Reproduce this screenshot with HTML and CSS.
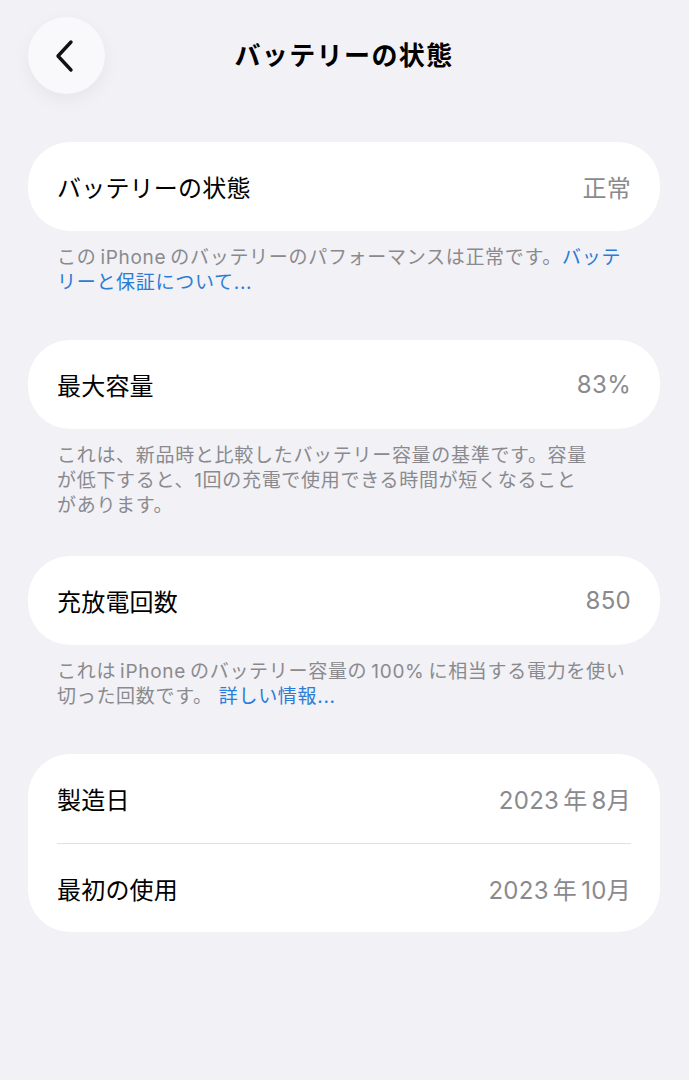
FILE: index.html
```html
<!DOCTYPE html>
<html lang="ja">
<head>
<meta charset="UTF-8">
<meta name="viewport" content="width=device-width, initial-scale=1.0">
<title>バッテリーの状態</title>
<link rel="stylesheet" href="styles.css">
</head>
<body>
  <div class="page">
    <div class="nav-bar">
      <button class="back-button" aria-label="戻る">
        <svg width="24" height="34" viewBox="0 0 24 34">
          <path d="M18 3 L5 17 L18 31" fill="none" stroke="#111" stroke-width="3.4" stroke-linecap="round" stroke-linejoin="round"/>
        </svg>
      </button>
      <h1 class="nav-title">バッテリーの状態</h1>
    </div>

    <div class="section">
      <div class="card">
        <div class="row">
          <span class="label">バッテリーの状態</span>
          <span class="value">正常</span>
        </div>
      </div>
      <p class="footnote">この<span class="latin">iPhone</span>のバッテリーのパフォーマンスは正常です。<a href="#">バッテ<br>リーと保証について...</a></p>
    </div>

    <div class="section">
      <div class="card">
        <div class="row">
          <span class="label">最大容量</span>
          <span class="value">83%</span>
        </div>
      </div>
      <p class="footnote">これは、新品時と比較したバッテリー容量の基準です。容量<br>が低下すると、1回の充電で使用できる時間が短くなること<br>があります。</p>
    </div>

    <div class="section section-tight">
      <div class="card">
        <div class="row">
          <span class="label">充放電回数</span>
          <span class="value">850</span>
        </div>
      </div>
      <p class="footnote">これは<span class="latin">iPhone</span>のバッテリー容量の<span class="latin">100%</span>に相当する電力を使い<br>切った回数です。 <a href="#">詳しい情報...</a></p>
    </div>

    <div class="section">
      <div class="card">
        <div class="row">
          <span class="label">製造日</span>
          <span class="value"><span class="num">2023</span>年<span class="num">8</span>月</span>
        </div>
        <div class="row">
          <span class="label">最初の使用</span>
          <span class="value"><span class="num">2023</span>年<span class="num">10</span>月</span>
        </div>
      </div>
    </div>
  </div>
</body>
</html>
```

FILE: styles.css
```css
body {
  margin: 0;
  padding: 0;
  background-color: #f1f1f6;
  font-family: Inter, "Noto Sans CJK JP", sans-serif;
  color: #000;
}

.page {
  padding: 17px 29px 40px 28px;
}

.nav-bar {
  display: flex;
  align-items: center;
  height: 77px;
}

.back-button {
  width: 77px;
  height: 77px;
  border-radius: 50%;
  border: none;
  padding: 0 4px 0 0;
  background-color: #f9f9fb;
  box-shadow: 0 6px 18px rgba(0, 0, 0, 0.05);
  display: flex;
  align-items: center;
  justify-content: center;
}

.nav-title {
  flex: 1;
  margin: 0 77px 0 0;
  text-align: center;
  font-size: 26px;
  font-weight: 700;
  letter-spacing: 1.4px;
  line-height: 1;
}

.section {
  margin-top: 45px;
}

.nav-bar + .section {
  margin-top: 48px;
}

/* 3 行の注記のあとは少し詰める */
.section-tight {
  margin-top: 38px;
}

.card {
  background-color: #fff;
  border-radius: 42px;
  padding: 0 29px;
}

.row {
  display: flex;
  justify-content: space-between;
  align-items: center;
  height: 89px;
  font-size: 24px;
}

.row + .row {
  border-top: 1px solid #e1e1e5;
  height: 88px;
}

.label {
  letter-spacing: 0.2px;
}

.value {
  color: #8a8a8e;
  letter-spacing: 0.3px;
}

.num {
  margin: 0 4px;
}

.num:last-child {
  margin-right: 0;
}

.footnote {
  margin: 14px 0 0;
  padding: 0 29px;
  font-size: 19px;
  line-height: 25px;
  color: #8a8a8e;
  letter-spacing: 0.7px;
}

.footnote .latin {
  margin: 0 4px;
}

.footnote a {
  color: #2c7cd5;
  text-decoration: none;
}
```
